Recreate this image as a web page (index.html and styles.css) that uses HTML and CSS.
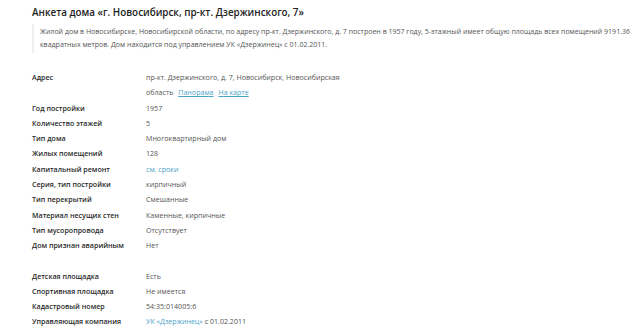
FILE: index.html
```html
<!DOCTYPE html>
<html lang="ru">
<head>
<meta charset="utf-8">
<link rel="stylesheet" href="styles.css">
</head>
<body>
<div class="page">
  <h1 class="title">Анкета дома «г. Новосибирск, пр-кт. Дзержинского, 7»</h1>
  <blockquote class="desc">Жилой дом в Новосибирске, Новосибирской области, по адресу пр-кт. Дзержинского, д. 7 построен в 1957 году, 5-этажный имеет общую площадь всех помещений 9191.36 квадратных метров. Дом находится под управлением УК «Дзержинец» с 01.02.2011.</blockquote>

  <div class="info">
    <div class="label">Адрес</div>
    <div class="value">пр-кт. Дзержинского, д. 7, Новосибирск, Новосибирская область <a class="link u" href="#">Панорама</a> <a class="link u" href="#">На карте</a></div>
    <div class="label">Год постройки</div><div class="value">1957</div>
    <div class="label">Количество этажей</div><div class="value">5</div>
    <div class="label">Тип дома</div><div class="value">Многоквартирный дом</div>
    <div class="label">Жилых помещений</div><div class="value">128</div>
    <div class="label">Капитальный ремонт</div><div class="value"><a class="link" href="#">см. сроки</a></div>
    <div class="label">Серия, тип постройки</div><div class="value">кирпичный</div>
    <div class="label">Тип перекрытий</div><div class="value">Смешанные</div>
    <div class="label">Материал несущих стен</div><div class="value">Каменные, кирпичные</div>
    <div class="label">Тип мусоропровода</div><div class="value">Отсутствует</div>
    <div class="label">Дом признан аварийным</div><div class="value">Нет</div>
  </div>

  <div class="info second">
    <div class="label">Детская площадка</div><div class="value">Есть</div>
    <div class="label">Спортивная площадка</div><div class="value">Не имеется</div>
    <div class="label">Кадастровый номер</div><div class="value">54:35:014005:6</div>
    <div class="label">Управляющая компания</div><div class="value"><a class="link" href="#">УК «Дзержинец»</a> с 01.02.2011</div>
  </div>
</div>
</body>
</html>
```

FILE: styles.css
```css
html, body {
  margin: 0;
  padding: 0;
  background: #fff;
}
body {
  font-family: "Open Sans", "Noto Sans", sans-serif;
  color: #333;
}
.page {
  padding: 5px 2px 0 32px;
}
.title {
  margin: 0;
  font-size: 9.85px;
  font-weight: 600;
  line-height: 14px;
  color: #222;
}
.desc {
  margin: 5px 0 0 0;
  padding: 1px 0 2px 6px;
  border-left: 2px solid #eee;
  font-size: 7.02px;
  line-height: 13px;
  color: #555;
}
.info {
  display: grid;
  grid-template-columns: 114px 200px;
  margin-top: 17px;
  font-size: 7.1px;
  line-height: 15.3px;
}
.info.second {
  margin-top: 15px;
}
.label {
  font-weight: 600;
  color: #2a2a2a;
}
.value {
  color: #555;
}
.link {
  color: #4aa3c8;
  text-decoration: none;
}
.link.u {
  text-decoration: underline;
  margin-left: 3px;
}
```
